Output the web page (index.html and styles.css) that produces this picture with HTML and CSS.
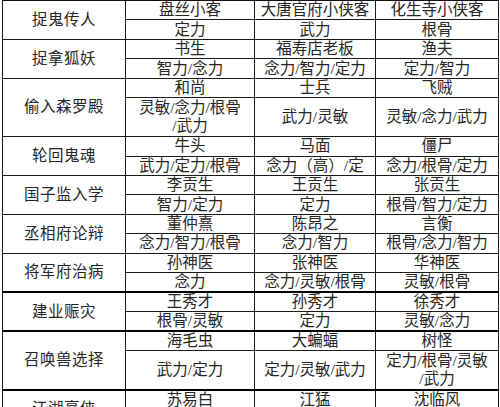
FILE: index.html
```html
<!DOCTYPE html>
<html lang="zh">
<head>
<meta charset="utf-8">
<link rel="stylesheet" href="styles.css">
</head>
<body>
<table class="grid">
  <colgroup><col class="c1"><col class="c2"><col class="c3"><col class="c4"></colgroup>
  <tr class="r top"><td class="task" rowspan="2">捉鬼传人</td><td>盘丝小客</td><td>大唐官府小侠客</td><td>化生寺小侠客</td></tr>
  <tr class="r"><td>定力</td><td>武力</td><td>根骨</td></tr>
  <tr class="r top"><td class="task" rowspan="2">捉拿狐妖</td><td>书生</td><td>福寿店老板</td><td>渔夫</td></tr>
  <tr class="r"><td>智力/念力</td><td>念力/智力/定力</td><td>定力/智力</td></tr>
  <tr class="r top"><td class="task" rowspan="2">偷入森罗殿</td><td>和尚</td><td>士兵</td><td>飞贼</td></tr>
  <tr class="rr"><td>灵敏/念力/根骨<br>/武力</td><td>武力/灵敏</td><td>灵敏/念力/武力</td></tr>
  <tr class="r top"><td class="task" rowspan="2">轮回鬼魂</td><td>牛头</td><td>马面</td><td>僵尸</td></tr>
  <tr class="r"><td>武力/定力/根骨</td><td class="clip">念力（高）/定</td><td>念力/根骨/定力</td></tr>
  <tr class="r top"><td class="task" rowspan="2">国子监入学</td><td>李贡生</td><td>王贡生</td><td>张贡生</td></tr>
  <tr class="r"><td>智力/定力</td><td>定力</td><td>根骨/智力/定力</td></tr>
  <tr class="r top"><td class="task" rowspan="2">丞相府论辩</td><td>董仲熹</td><td>陈昂之</td><td>言衡</td></tr>
  <tr class="r"><td>念力/智力/根骨</td><td>念力/智力</td><td>根骨/念力/智力</td></tr>
  <tr class="r top"><td class="task" rowspan="2">将军府治病</td><td>孙神医</td><td>张神医</td><td>华神医</td></tr>
  <tr class="r"><td>念力</td><td>念力/灵敏/根骨</td><td>灵敏/根骨</td></tr>
  <tr class="r top thick"><td class="task" rowspan="2">建业赈灾</td><td>王秀才</td><td>孙秀才</td><td>徐秀才</td></tr>
  <tr class="r"><td>根骨/灵敏</td><td>定力</td><td>灵敏/念力</td></tr>
  <tr class="r top thick"><td class="task" rowspan="2">召唤兽选择</td><td>海毛虫</td><td>大蝙蝠</td><td>树怪</td></tr>
  <tr class="rr"><td>武力/定力</td><td>定力/灵敏/武力</td><td>定力/根骨/灵敏<br>/武力</td></tr>
  <tr class="r top thick"><td class="task" rowspan="2">江湖豪侠</td><td>苏易白</td><td>江猛</td><td>沈临风</td></tr>
  <tr class="r"><td>武力</td><td>武力</td><td>武力</td></tr>
</table>
</body>
</html>
```

FILE: styles.css
```css
html, body {
  margin: 0;
  padding: 0;
  background: #ffffff;
}
body {
  overflow: hidden;
  width: 500px;
  height: 407px;
}
.grid {
  margin: 0 0 0 2px;
  border-collapse: collapse;
  table-layout: fixed;
  width: 496px;
  font-family: "Liberation Serif", "Noto Sans CJK SC", serif;
  font-size: 15.5px;
  line-height: 18px;
  color: #252525;
}
.c1 { width: 123px; }
.c2 { width: 129px; }
.c3 { width: 121px; }
.c4 { width: 123px; }
.grid td {
  border: 1px solid #1a1a1a;
  padding: 0;
  text-align: center;
  vertical-align: middle;
  white-space: nowrap;
  overflow: hidden;
}
.r { height: 19.45px; }
.rr { height: 38.9px; }
.top td { border-top: 1px solid #111; }
.thick td { border-top: 2px solid #000; }
.task { letter-spacing: 0.5px; }
.clip { text-overflow: clip; }
```
